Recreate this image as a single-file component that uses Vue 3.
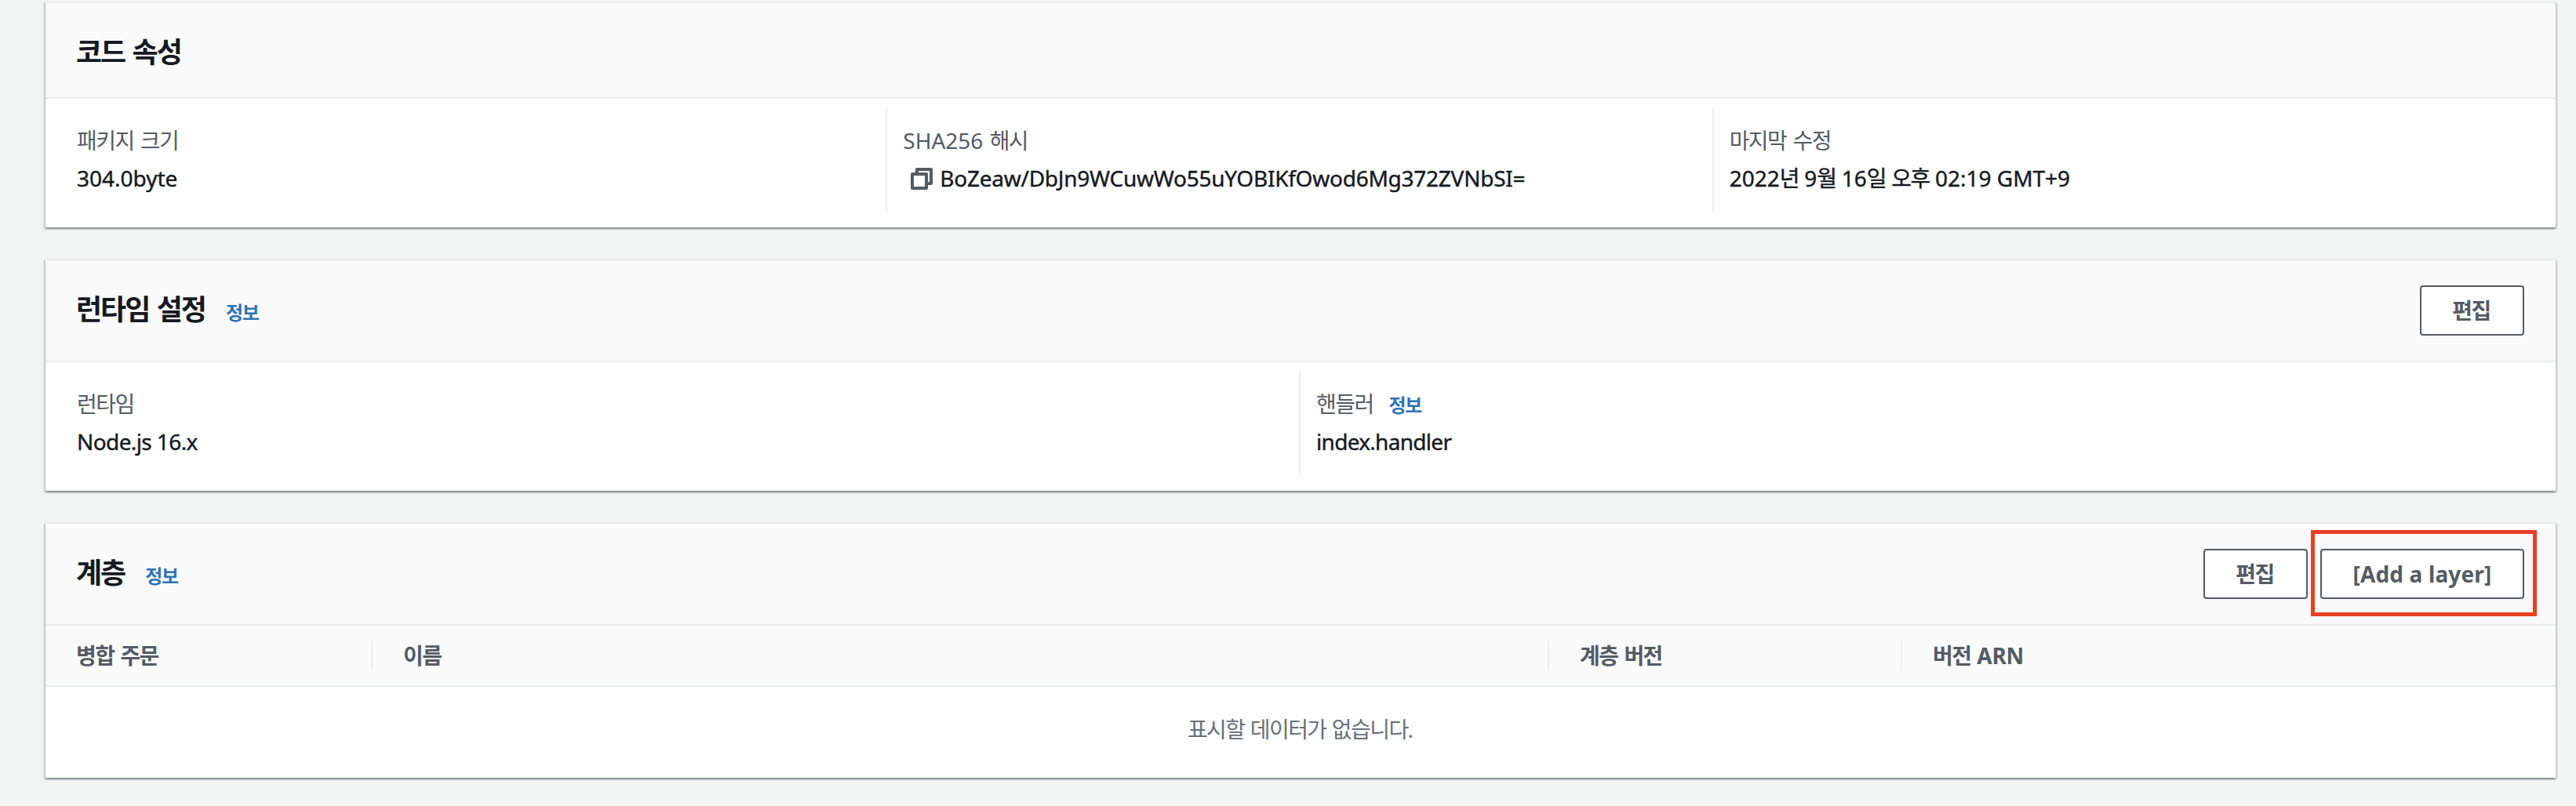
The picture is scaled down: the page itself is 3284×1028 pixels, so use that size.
<script setup>
import { h } from 'vue'

// Splits a string into Hangul and Latin runs so each script gets its own tracking.
const Txt = (props) =>
  h(
    'span',
    { class: 'txt' },
    props.t
      .split(/([\uac00-\ud7a3]+)/)
      .filter(Boolean)
      .map((s) => (/[\uac00-\ud7a3]/.test(s) ? h('span', { class: 'ko' }, s) : s)),
  )
Txt.props = ['t']

const codeProps = [
  { label: '패키지 크기', value: '304.0byte' },
  { label: 'SHA256 해시', value: 'BoZeaw/DbJn9WCuwWo55uYOBIKfOwod6Mg372ZVNbSI=', copy: true, fit: 'snug' },
  { label: '마지막 수정', value: '2022년 9월 16일 오후 02:19 GMT+9' },
]
const runtimeProps = [
  { label: '런타임', value: 'Node.js 16.x', fit: 'tight' },
  { label: '핸들러', value: 'index.handler', info: true, fit: 'tighter' },
]
const columns = [
  { key: 'order', title: '병합 주문' },
  { key: 'name', title: '이름' },
  { key: 'version', title: '계층 버전' },
  { key: 'arn', title: '버전 ARN' },
]
</script>

<template>
  <main class="page">
    <section class="card">
      <header class="head plain">
        <h2><Txt t="코드 속성" /></h2>
      </header>
      <div class="props">
        <div v-for="p in codeProps" :key="p.label" class="prop">
          <div class="label"><Txt :t="p.label" /></div>
          <div class="value" :class="p.fit">
            <svg v-if="p.copy" class="copy" width="28" height="28" viewBox="0 0 28 28">
              <path d="M8 7V2h18v18h-5" />
              <path d="M2 8h18v18H2z" />
            </svg>
            <Txt :t="p.value" />
          </div>
        </div>
      </div>
    </section>

    <section class="card">
      <header class="head">
        <h2><Txt t="런타임 설정" /></h2>
        <a class="info"><Txt t="정보" /></a>
        <div class="actions">
          <button class="btn edit"><Txt t="편집" /></button>
        </div>
      </header>
      <div class="props">
        <div v-for="p in runtimeProps" :key="p.label" class="prop">
          <div class="label">
            <Txt :t="p.label" /><a v-if="p.info" class="info"><Txt t="정보" /></a>
          </div>
          <div class="value" :class="p.fit"><Txt :t="p.value" /></div>
        </div>
      </div>
    </section>

    <section class="card">
      <header class="head">
        <h2><Txt t="계층" /></h2>
        <a class="info"><Txt t="정보" /></a>
        <div class="actions">
          <button class="btn edit"><Txt t="편집" /></button>
          <div class="marked">
            <button class="btn add"><Txt t="[Add a layer]" /></button>
          </div>
        </div>
      </header>
      <div class="thead">
        <div v-for="c in columns" :key="c.key" class="th" :class="c.key"><Txt :t="c.title" /></div>
      </div>
      <div class="empty"><Txt t="표시할 데이터가 없습니다." /></div>
    </section>
  </main>
</template>

<style>
body {
  background: #f2f3f3;
}
</style>

<style scoped>
.page {
  box-sizing: border-box;
  height: 1028px;
  padding: 2px 26px 0 58px;
  display: flex;
  flex-direction: column;
  gap: 40px;
  overflow: hidden;
  background: #f2f3f3;
  color: #16191f;
  font: 400 28px/44px 'Noto Sans', 'Noto Sans CJK KR', sans-serif;
  white-space: nowrap;
}
.card {
  border-top: 2px solid #eaeded;
  background: #fff;
  box-shadow:
    0 2px 2px 0 rgba(0, 28, 36, 0.3),
    2px 2px 2px 0 rgba(0, 28, 36, 0.15),
    -2px 2px 2px 0 rgba(0, 28, 36, 0.15);
}
:deep(.ko) {
  letter-spacing: -0.056em;
}
.head {
  box-sizing: border-box;
  height: 130px;
  padding: 0 40px 0 39px;
  display: flex;
  align-items: baseline;
  border-bottom: 2px solid #eaeded;
  background: #fafafa;
}
.head.plain {
  height: 122px;
}
h2 {
  margin: 0;
  font-size: 36px;
  font-weight: 700;
  line-height: 125px;
}
.info {
  margin-left: 26px;
  color: #2e73b8;
  font-size: 24px;
  font-weight: 700;
}
.label .info {
  margin-left: 20px;
}
.actions {
  align-self: center;
  margin-left: auto;
  display: flex;
  gap: 16px;
}
.btn {
  box-sizing: border-box;
  height: 64px;
  padding: 0;
  border: 2px solid #545b64;
  border-radius: 4px;
  background: #fff;
  color: #545b64;
  font: inherit;
  font-weight: 700;
  letter-spacing: 0.15px;
}
.edit {
  width: 133px;
  padding-right: 2px;
}
.add {
  width: 260px;
}
.marked {
  position: relative;
  display: flex;
}
.marked::after {
  content: '';
  position: absolute;
  inset: -24px -16px -22px -12px;
  border: 5px solid #e84025;
}
.props {
  display: flex;
  padding: 12px 22px 20px 18px;
}
.prop {
  box-sizing: border-box;
  flex: 1 1 0;
  height: 132px;
  padding: 19px 20px 0;
  border-left: 2px solid #eaeded;
}
.prop:first-child {
  border-color: transparent;
}
.label {
  margin-bottom: 4px;
  height: 44px;
  color: #545b64;
}
.value {
  display: flex;
  align-items: center;
  height: 44px;
  -webkit-text-stroke: 0.4px #16191f;
}
.snug {
  letter-spacing: -0.25px;
}
.tight {
  letter-spacing: -0.6px;
}
.tighter {
  letter-spacing: -0.7px;
}
.copy {
  margin: 2px 9px 0 10px;
  fill: none;
  stroke: #545b64;
  stroke-width: 4;
  stroke-linejoin: round;
}
.label,
.th {
  word-spacing: 1px;
}
.thead {
  box-sizing: border-box;
  height: 78px;
  display: flex;
  align-items: center;
  border-bottom: 2px solid #eaeded;
  background: #fafafa;
}
.th {
  box-sizing: border-box;
  height: 38px;
  padding-left: 39px;
  border-left: 2px solid #eaeded;
  color: #545b64;
  font-weight: 700;
  line-height: 38px;
  letter-spacing: -0.3px;
}
.order {
  width: 415px;
  border-left: 0;
}
.name {
  width: 1500px;
}
.version {
  width: 450px;
}
.arn {
  flex: 1;
}
.empty {
  height: 116px;
  color: #687078;
  line-height: 108px;
  text-align: center;
}
</style>
